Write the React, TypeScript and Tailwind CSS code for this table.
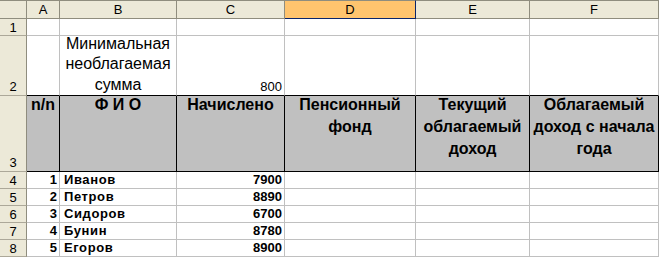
import React from "react";

const cols = ["A", "B", "C", "D", "E", "F"];

const people = [
  { n: 1, name: "Иванов", sum: 7900 },
  { n: 2, name: "Петров", sum: 8890 },
  { n: 3, name: "Сидоров", sum: 6700 },
  { n: 4, name: "Бунин", sum: 8780 },
  { n: 5, name: "Егоров", sum: 8900 },
];

function RowHead({ label, end }: { label: string; end?: boolean }) {
  return (
    <div
      className={`flex justify-center bg-[#ECE9D8] border-r border-b border-r-[#8f8d7e] border-b-[#aca899] text-[13px] leading-[15px] ${
        end ? "items-end pb-[1px]" : "items-center"
      }`}
    >
      {label}
    </div>
  );
}

function Cell({ children, className = "" }: { children?: React.ReactNode; className?: string }) {
  return <div className={`border-r border-b border-[#c0c0c0] ${className}`}>{children}</div>;
}

function HeadCell({ children }: { children?: React.ReactNode }) {
  return (
    <div className="bg-[#c0c0c0] border-r border-b border-black flex justify-center text-center font-bold text-[16px] leading-[22px] overflow-hidden">
      <div className="-mt-[2px]">{children}</div>
    </div>
  );
}

export default function App() {
  return (
    <div className="w-[661px] h-[258px] bg-white text-black font-['Liberation_Sans',Arial,sans-serif] overflow-hidden">
      <div className="grid grid-cols-[27px_33px_117px_108px_131px_114px_129px] grid-rows-[19px_17px_60px_76px_17px_17px_17px_17px_17px]">
        {/* column letters */}
        <div className="bg-[#ECE9D8] border-t border-r border-b border-[#8f8d7e]" />
        {cols.map((c) =>
          c === "D" ? (
            <div
              key={c}
              className="bg-[#FFC46E] border-t border-t-[#8f8d7e] border-r border-b border-r-[#0a246a] border-b-[#0a246a] flex items-center justify-center text-[13px]"
            >
              {c}
            </div>
          ) : (
            <div
              key={c}
              className="bg-[#ECE9D8] border-t border-r border-b border-[#8f8d7e] flex items-center justify-center text-[13px]"
            >
              {c}
            </div>
          )
        )}

        {/* row 1 */}
        <RowHead label="1" />
        {cols.map((c) => (
          <Cell key={c} />
        ))}

        {/* row 2 */}
        <RowHead label="2" end />
        <Cell className="border-b-black" />
        <div className="border-r border-[#c0c0c0] border-b border-b-black flex items-end justify-center text-center text-[16px] leading-[20.5px]">
          Минимальная необлагаемая сумма
        </div>
        <div className="border-r border-[#c0c0c0] border-b border-b-black flex items-end justify-end pr-[2px] text-[13px] leading-[16px]">
          800
        </div>
        <Cell className="border-b-black" />
        <Cell className="border-b-black" />
        <Cell className="border-b-black" />

        {/* row 3 */}
        <RowHead label="3" end />
        <HeadCell>n/n</HeadCell>
        <HeadCell>Ф И О</HeadCell>
        <HeadCell>Начислено</HeadCell>
        <HeadCell>
          Пенсионный
          <br />
          фонд
        </HeadCell>
        <HeadCell>
          Текущий
          <br />
          облагаемый
          <br />
          доход
        </HeadCell>
        <HeadCell>
          Облагаемый
          <br />
          доход с начала
          <br />
          года
        </HeadCell>

        {/* data rows */}
        {people.map((p) => (
          <React.Fragment key={p.n}>
            <RowHead label={String(p.n + 3)} />
            <Cell className="flex items-end justify-end pr-[2px] font-bold text-[13px] leading-[16px]">{p.n}</Cell>
            <Cell className="flex items-end pl-[4px] font-bold text-[13px] leading-[16px] tracking-[0.6px]">{p.name}</Cell>
            <Cell className="flex items-end justify-end pr-[2px] font-bold text-[13px] leading-[16px]">{p.sum}</Cell>
            <Cell />
            <Cell />
            <Cell />
          </React.Fragment>
        ))}
      </div>
    </div>
  );
}
